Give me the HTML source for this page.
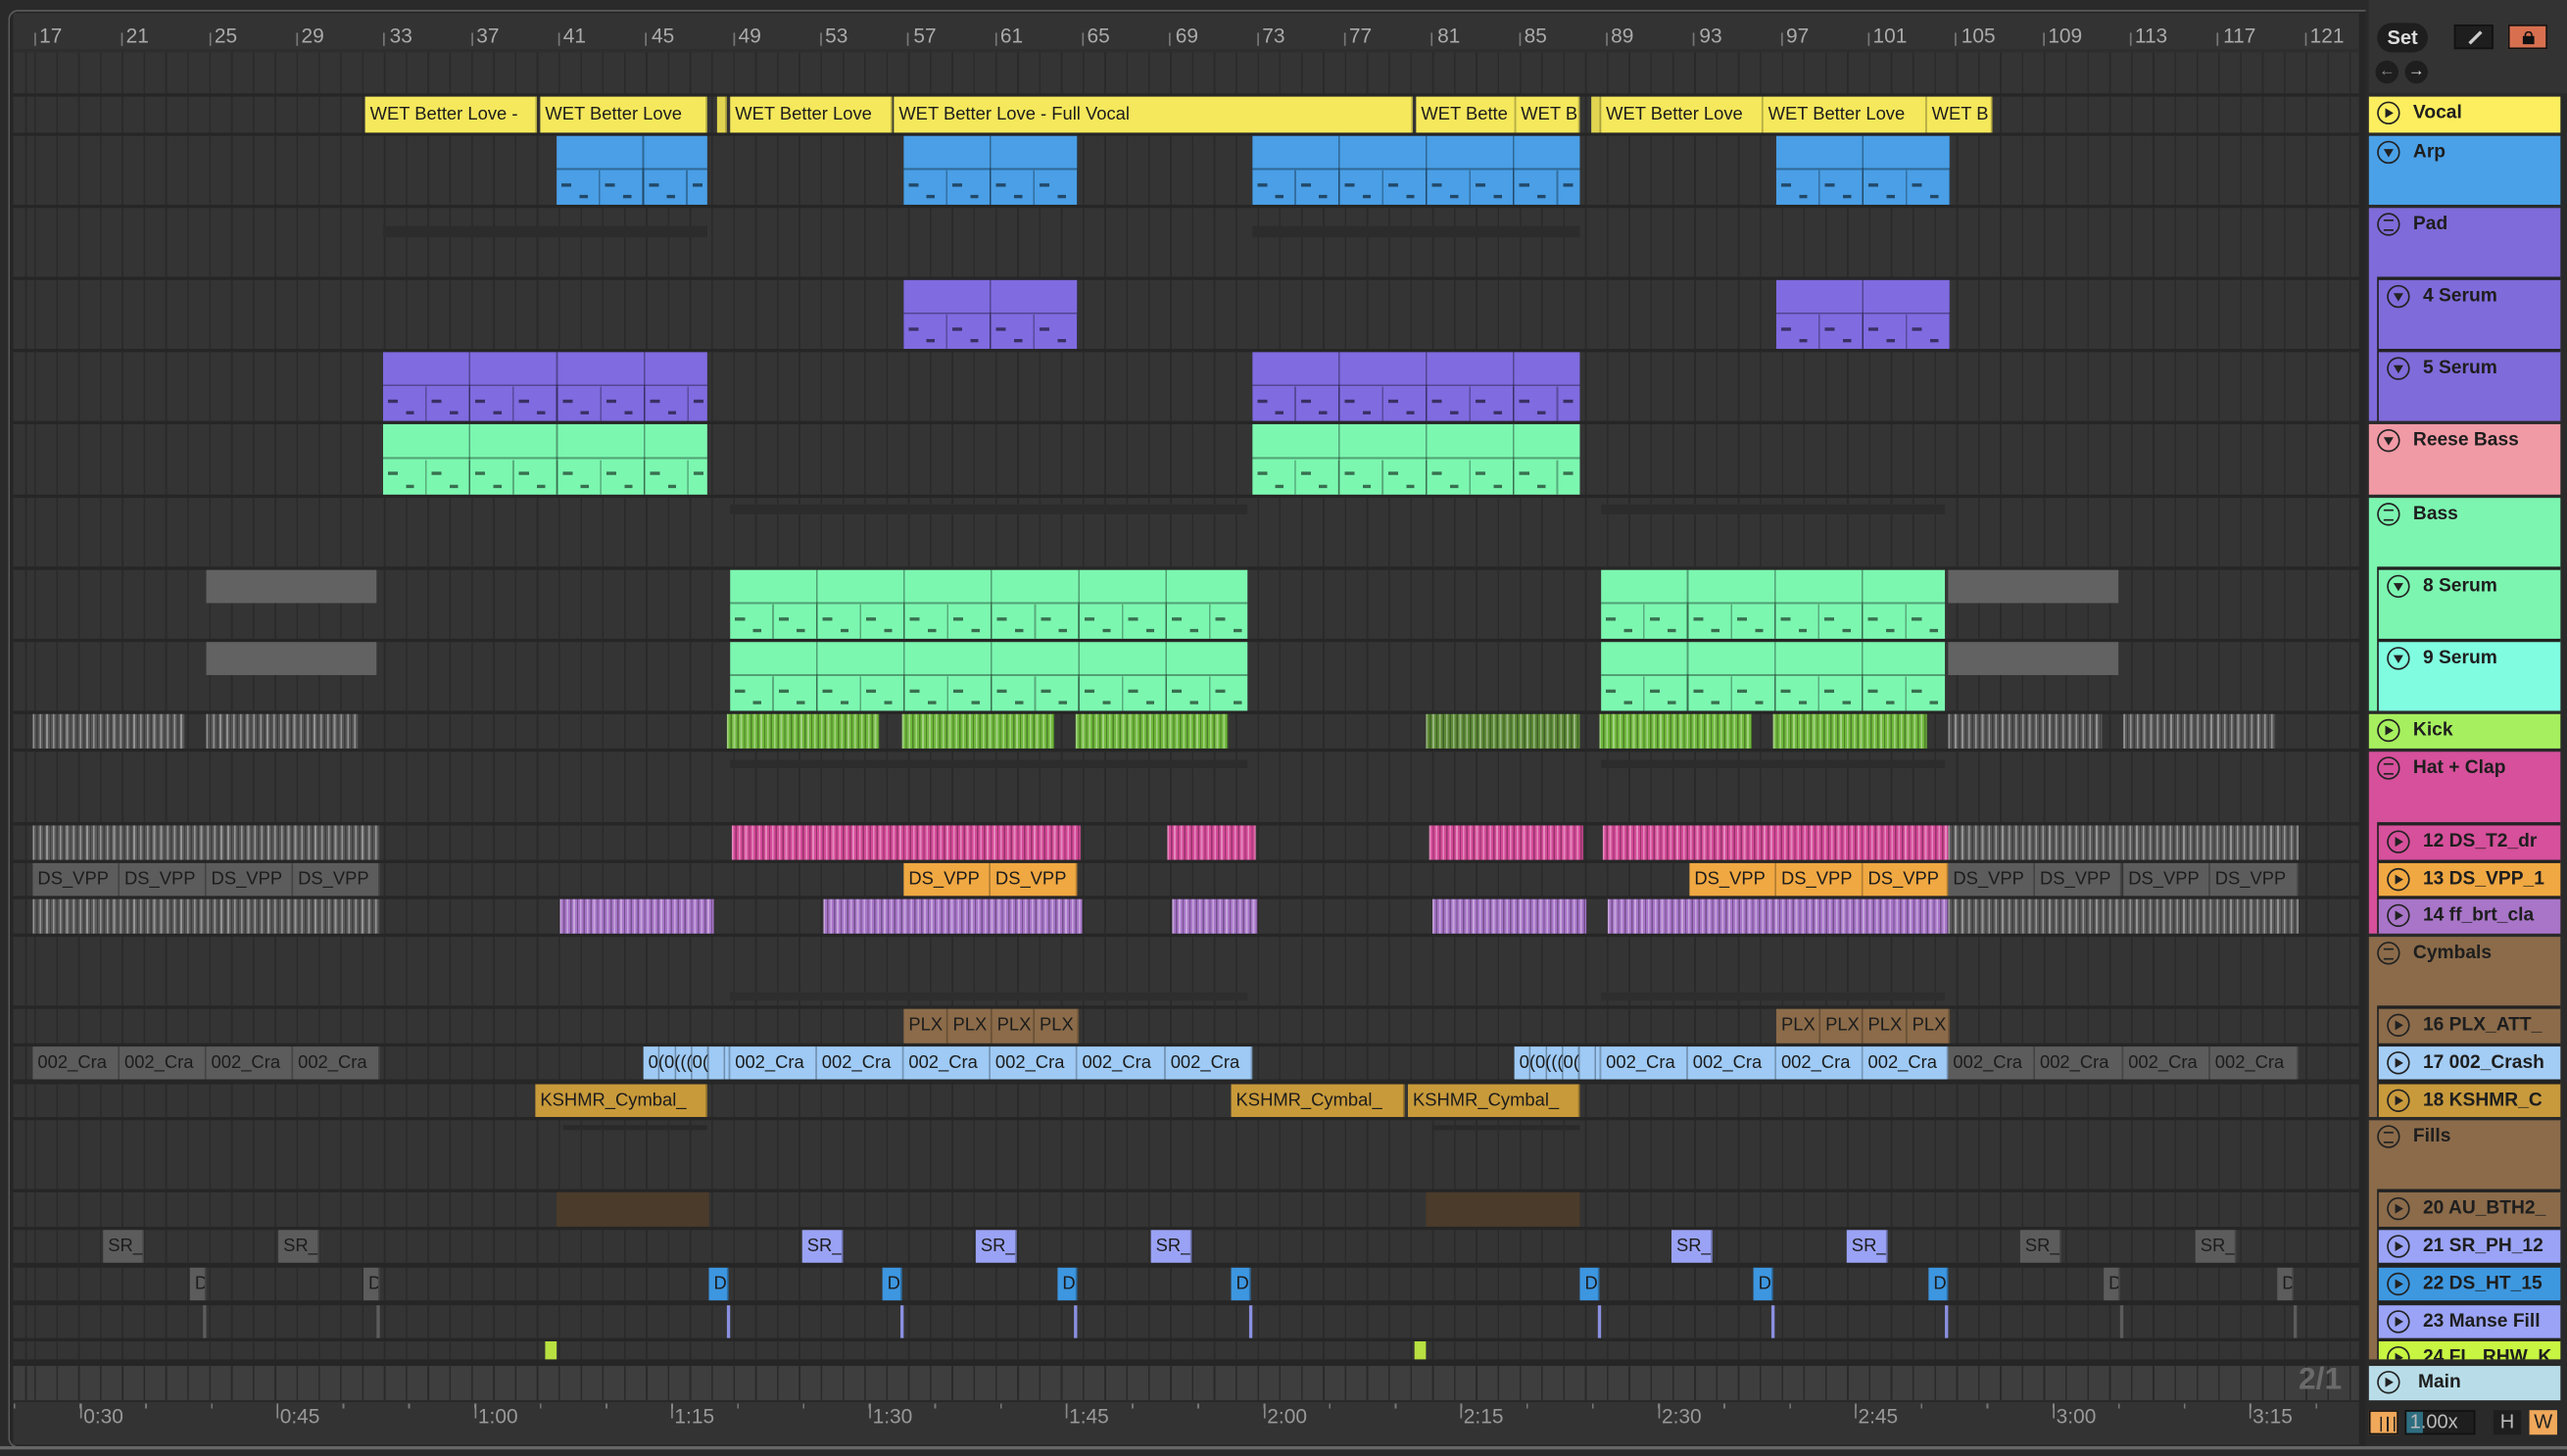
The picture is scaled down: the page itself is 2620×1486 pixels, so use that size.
<!DOCTYPE html>
<html><head><meta charset="utf-8"><style>
*{margin:0;padding:0;box-sizing:border-box}
html,body{width:2620px;height:1486px;overflow:hidden;background:#2a2a2a}
#s{position:absolute;left:0;top:0;width:1568px;height:889px;transform:scale(1.67092,1.67154);transform-origin:0 0;font-family:"Liberation Sans",sans-serif}
.a{position:absolute}
#panel{position:absolute;left:5px;top:6px;width:1440px;height:878px;border:1.5px solid #5a5a5a;border-right:none;border-radius:6px 0 0 6px;background:#262626}
.r{position:absolute;left:8px;width:1433px;background-color:#343434;background-image:repeating-linear-gradient(90deg,#2a2a2a 0 1px,transparent 1px 13.34px);background-position:13px 0}
.c{position:absolute;top:0;height:100%;overflow:hidden;white-space:nowrap;font-size:11px;line-height:100%;color:#1c1c1c}
.t{display:flex;align-items:center;padding-left:3px;border-right:1px solid rgba(0,0,0,.25)}
.m{background-image:linear-gradient(180deg,transparent 0 47%,rgba(0,0,0,.35) 47% calc(47% + 1px),transparent calc(47% + 1px)),repeating-linear-gradient(90deg,transparent 0 52.4px,rgba(0,0,0,.35) 52.4px 53.36px)}
.m::after{content:"";position:absolute;left:0;right:0;bottom:0;top:50%;background-image:repeating-linear-gradient(90deg,transparent 0 25.7px,rgba(0,0,0,.3) 25.7px 26.68px),repeating-linear-gradient(90deg,transparent 0 3px,rgba(0,0,0,.55) 3px 9px,transparent 9px 26.68px),repeating-linear-gradient(90deg,transparent 0 14px,rgba(0,0,0,.55) 14px 19px,transparent 19px 26.68px);background-size:auto,100% 2px,100% 2px;background-repeat:repeat,repeat-x,repeat-x;background-position:0 0,0 40%,0 80%}
.g{background:linear-gradient(180deg,#626262 0 48%,transparent 48%)}
.w{background-image:repeating-linear-gradient(90deg,rgba(255,255,255,.35) 0 1px,transparent 1px 2.2px,rgba(0,0,0,.3) 2.2px 3px,transparent 3px 4.1px)}
.h{position:absolute;left:1447px;width:117px;font-weight:bold;font-size:11.5px;color:#1e1e1e;padding-left:27px;padding-top:4px;white-space:nowrap;overflow:hidden}
.h.k{left:1453px;width:111px;padding-left:27px}
.h i{position:absolute;left:5px;top:3px;width:14px;height:14px;border:1.3px solid #222;border-radius:50%}
.h i.p::after{content:"";position:absolute;left:4px;top:2.5px;border-left:5px solid #222;border-top:3.3px solid transparent;border-bottom:3.3px solid transparent}
.h i.d::after{content:"";position:absolute;left:2.6px;top:4px;border-top:5px solid #222;border-left:3.3px solid transparent;border-right:3.3px solid transparent}
.h i.l::after{content:"";position:absolute;left:2.5px;top:3px;width:6px;height:5px;border-top:1.2px solid #222;border-bottom:1.2px solid #222}
.num{position:absolute;top:15px;font-size:12.5px;color:#aaa}
.tk{position:absolute;top:20px;width:1px;height:8px;background:#777}
.tm{position:absolute;top:858px;font-size:12.5px;color:#999}
.lt{position:absolute;top:857px;width:1px;height:9px;background:#888}
</style></head><body><div id="s">
<div id="panel"></div>
<div class="a" style="left:8px;top:8px;width:1433px;height:22px;background:#333"></div>
<div class="r" style="top:30px;height:27px"></div>
<div class="a" style="left:8px;top:30px;width:1433px;height:2px;background:#2e2e2e"></div>
<div class="tk" style="left:21px"></div><span class="num" style="left:24px">17</span>
<div class="tk" style="left:74px"></div><span class="num" style="left:77px">21</span>
<div class="tk" style="left:128px"></div><span class="num" style="left:131px">25</span>
<div class="tk" style="left:181px"></div><span class="num" style="left:184px">29</span>
<div class="tk" style="left:234px"></div><span class="num" style="left:238px">33</span>
<div class="tk" style="left:288px"></div><span class="num" style="left:291px">37</span>
<div class="tk" style="left:341px"></div><span class="num" style="left:344px">41</span>
<div class="tk" style="left:394px"></div><span class="num" style="left:398px">45</span>
<div class="tk" style="left:448px"></div><span class="num" style="left:451px">49</span>
<div class="tk" style="left:501px"></div><span class="num" style="left:504px">53</span>
<div class="tk" style="left:554px"></div><span class="num" style="left:558px">57</span>
<div class="tk" style="left:608px"></div><span class="num" style="left:611px">61</span>
<div class="tk" style="left:661px"></div><span class="num" style="left:664px">65</span>
<div class="tk" style="left:714px"></div><span class="num" style="left:718px">69</span>
<div class="tk" style="left:768px"></div><span class="num" style="left:771px">73</span>
<div class="tk" style="left:821px"></div><span class="num" style="left:824px">77</span>
<div class="tk" style="left:874px"></div><span class="num" style="left:878px">81</span>
<div class="tk" style="left:928px"></div><span class="num" style="left:931px">85</span>
<div class="tk" style="left:981px"></div><span class="num" style="left:984px">89</span>
<div class="tk" style="left:1034px"></div><span class="num" style="left:1038px">93</span>
<div class="tk" style="left:1088px"></div><span class="num" style="left:1091px">97</span>
<div class="tk" style="left:1141px"></div><span class="num" style="left:1144px">101</span>
<div class="tk" style="left:1194px"></div><span class="num" style="left:1198px">105</span>
<div class="tk" style="left:1248px"></div><span class="num" style="left:1251px">109</span>
<div class="tk" style="left:1301px"></div><span class="num" style="left:1304px">113</span>
<div class="tk" style="left:1354px"></div><span class="num" style="left:1358px">117</span>
<div class="tk" style="left:1408px"></div><span class="num" style="left:1411px">121</span>

<div class="r" style="top:59px;height:22px">
<div class="c t" style="left:215px;width:105px;background:#f5e85c">WET Better Love -</div>
<div class="c t" style="left:322px;width:102px;background:#f5e85c">WET Better Love</div>
<div class="c t" style="left:430px;width:6px;background:#e0d450"></div>
<div class="c t" style="left:438px;width:99px;background:#f5e85c">WET Better Love</div>
<div class="c t" style="left:538px;width:317px;background:#f5e85c">WET Better Love - Full Vocal</div>
<div class="c t" style="left:857px;width:61px;background:#f5e85c">WET Bette</div>
<div class="c t" style="left:918px;width:39px;background:#f5e85c">WET B</div>
<div class="c t" style="left:964px;width:6px;background:#e0d450"></div>
<div class="c t" style="left:970px;width:99px;background:#f5e85c">WET Better Love</div>
<div class="c t" style="left:1069px;width:100px;background:#f5e85c">WET Better Love</div>
<div class="c t" style="left:1169px;width:40px;background:#f5e85c">WET B</div>
</div>
<div class="r" style="top:83px;height:42px">
<div class="c m" style="left:332px;width:92px;background-color:#4a9fe6"></div>
<div class="c m" style="left:544px;width:106px;background-color:#4a9fe6"></div>
<div class="c m" style="left:757px;width:200px;background-color:#4a9fe6"></div>
<div class="c m" style="left:1077px;width:106px;background-color:#4a9fe6"></div>
</div>
<div class="r" style="top:127px;height:42px">
<div class="a" style="left:226px;top:11px;width:198px;height:7px;background:#2c2c2c"></div>
<div class="a" style="left:757px;top:11px;width:200px;height:7px;background:#2c2c2c"></div>
</div>
<div class="r" style="top:171px;height:42px">
<div class="c m" style="left:544px;width:106px;background-color:#806be0"></div>
<div class="c m" style="left:1077px;width:106px;background-color:#806be0"></div>
</div>
<div class="r" style="top:215px;height:42px">
<div class="c m" style="left:226px;width:198px;background-color:#806be0"></div>
<div class="c m" style="left:757px;width:200px;background-color:#806be0"></div>
</div>
<div class="r" style="top:259px;height:43px">
<div class="c m" style="left:226px;width:198px;background-color:#7cf7b0"></div>
<div class="c m" style="left:757px;width:200px;background-color:#7cf7b0"></div>
</div>
<div class="r" style="top:304px;height:42px">
<div class="a" style="left:438px;top:4px;width:316px;height:6px;background:#2c2c2c"></div>
<div class="a" style="left:970px;top:4px;width:210px;height:6px;background:#2c2c2c"></div>
</div>
<div class="r" style="top:348px;height:42px">
<div class="c g" style="left:118px;width:104px"></div>
<div class="c m" style="left:438px;width:316px;background-color:#7cf7b0"></div>
<div class="c m" style="left:970px;width:210px;background-color:#7cf7b0"></div>
<div class="c g" style="left:1182px;width:104px"></div>
</div>
<div class="r" style="top:392px;height:42px">
<div class="c g" style="left:118px;width:104px"></div>
<div class="c m" style="left:438px;width:316px;background-color:#7cf7b0"></div>
<div class="c m" style="left:970px;width:210px;background-color:#7cf7b0"></div>
<div class="c g" style="left:1182px;width:104px"></div>
</div>
<div class="r" style="top:436px;height:21px">
<div class="c w" style="left:12px;width:93px;background-color:#565656"></div>
<div class="c w" style="left:118px;width:93px;background-color:#565656"></div>
<div class="c w" style="left:436px;width:93px;background-color:#6fb83c"></div>
<div class="c w" style="left:543px;width:93px;background-color:#6fb83c"></div>
<div class="c w" style="left:649px;width:93px;background-color:#6fb83c"></div>
<div class="c w" style="left:863px;width:94px;background-color:#5c8a36"></div>
<div class="c w" style="left:969px;width:93px;background-color:#6fb83c"></div>
<div class="c w" style="left:1075px;width:94px;background-color:#6fb83c"></div>
<div class="c w" style="left:1182px;width:94px;background-color:#565656"></div>
<div class="c w" style="left:1289px;width:93px;background-color:#565656"></div>
</div>
<div class="r" style="top:459px;height:43px">
<div class="a" style="left:438px;top:5px;width:316px;height:5px;background:#2c2c2c"></div>
<div class="a" style="left:970px;top:5px;width:210px;height:5px;background:#2c2c2c"></div>
</div>
<div class="r" style="top:504px;height:21px">
<div class="c w" style="left:12px;width:212px;background-color:#5a5a5a"></div>
<div class="c w" style="left:439px;width:213px;background-color:#d44a98"></div>
<div class="c w" style="left:705px;width:54px;background-color:#d44a98"></div>
<div class="c w" style="left:865px;width:94px;background-color:#d44a98"></div>
<div class="c w" style="left:971px;width:211px;background-color:#d44a98"></div>
<div class="c w" style="left:1182px;width:214px;background-color:#5a5a5a"></div>
</div>
<div class="r" style="top:527px;height:20px">
<div class="c t" style="left:12px;width:53px;background:#5c5c5c">DS_VPP</div>
<div class="c t" style="left:65px;width:53px;background:#5c5c5c">DS_VPP</div>
<div class="c t" style="left:118px;width:53px;background:#5c5c5c">DS_VPP</div>
<div class="c t" style="left:171px;width:53px;background:#5c5c5c">DS_VPP</div>
<div class="c t" style="left:544px;width:53px;background:#f0a842">DS_VPP</div>
<div class="c t" style="left:597px;width:53px;background:#f0a842">DS_VPP</div>
<div class="c t" style="left:1024px;width:53px;background:#f0a842">DS_VPP</div>
<div class="c t" style="left:1077px;width:53px;background:#f0a842">DS_VPP</div>
<div class="c t" style="left:1130px;width:52px;background:#f0a842">DS_VPP</div>
<div class="c t" style="left:1182px;width:53px;background:#5c5c5c">DS_VPP</div>
<div class="c t" style="left:1235px;width:53px;background:#5c5c5c">DS_VPP</div>
<div class="c t" style="left:1289px;width:53px;background:#5c5c5c">DS_VPP</div>
<div class="c t" style="left:1342px;width:54px;background:#5c5c5c">DS_VPP</div>
</div>
<div class="r" style="top:549px;height:21px">
<div class="c w" style="left:12px;width:212px;background-color:#5a5a5a"></div>
<div class="c w" style="left:334px;width:94px;background-color:#a775c8"></div>
<div class="c w" style="left:495px;width:158px;background-color:#a775c8"></div>
<div class="c w" style="left:708px;width:52px;background-color:#a775c8"></div>
<div class="c w" style="left:867px;width:94px;background-color:#a775c8"></div>
<div class="c w" style="left:974px;width:208px;background-color:#a775c8"></div>
<div class="c w" style="left:1182px;width:214px;background-color:#5a5a5a"></div>
</div>
<div class="r" style="top:572px;height:42px">
<div class="a" style="left:438px;top:34px;width:316px;height:5px;background:#2e2e2e"></div>
<div class="a" style="left:970px;top:34px;width:210px;height:5px;background:#2e2e2e"></div>
</div>
<div class="r" style="top:616px;height:21px">
<div class="c t" style="left:544px;width:27px;background:#8b6b49">PLX</div>
<div class="c t" style="left:571px;width:27px;background:#8b6b49">PLX</div>
<div class="c t" style="left:598px;width:26px;background:#8b6b49">PLX</div>
<div class="c t" style="left:624px;width:27px;background:#8b6b49">PLX</div>
<div class="c t" style="left:1077px;width:27px;background:#8b6b49">PLX</div>
<div class="c t" style="left:1104px;width:26px;background:#8b6b49">PLX</div>
<div class="c t" style="left:1130px;width:27px;background:#8b6b49">PLX</div>
<div class="c t" style="left:1157px;width:26px;background:#8b6b49">PLX</div>
</div>
<div class="r" style="top:639px;height:20px">
<div class="c t" style="left:12px;width:53px;background:#5c5c5c">002_Cra</div>
<div class="c t" style="left:65px;width:53px;background:#5c5c5c">002_Cra</div>
<div class="c t" style="left:118px;width:53px;background:#5c5c5c">002_Cra</div>
<div class="c t" style="left:171px;width:53px;background:#5c5c5c">002_Cra</div>
<div class="c t" style="left:385px;width:53px;background:#9ecaf5;background-image:repeating-linear-gradient(90deg,transparent 0 9px,rgba(0,0,0,.3) 9px 10px)">0(0(((0(</div>
<div class="c t" style="left:438px;width:53px;background:#9ecaf5">002_Cra</div>
<div class="c t" style="left:491px;width:53px;background:#9ecaf5">002_Cra</div>
<div class="c t" style="left:544px;width:53px;background:#9ecaf5">002_Cra</div>
<div class="c t" style="left:597px;width:53px;background:#9ecaf5">002_Cra</div>
<div class="c t" style="left:650px;width:54px;background:#9ecaf5">002_Cra</div>
<div class="c t" style="left:704px;width:53px;background:#9ecaf5">002_Cra</div>
<div class="c t" style="left:917px;width:53px;background:#9ecaf5;background-image:repeating-linear-gradient(90deg,transparent 0 9px,rgba(0,0,0,.3) 9px 10px)">0(0(((0(</div>
<div class="c t" style="left:970px;width:53px;background:#9ecaf5">002_Cra</div>
<div class="c t" style="left:1023px;width:54px;background:#9ecaf5">002_Cra</div>
<div class="c t" style="left:1077px;width:53px;background:#9ecaf5">002_Cra</div>
<div class="c t" style="left:1130px;width:52px;background:#9ecaf5">002_Cra</div>
<div class="c t" style="left:1182px;width:53px;background:#5c5c5c">002_Cra</div>
<div class="c t" style="left:1235px;width:54px;background:#5c5c5c">002_Cra</div>
<div class="c t" style="left:1289px;width:53px;background:#5c5c5c">002_Cra</div>
<div class="c t" style="left:1342px;width:54px;background:#5c5c5c">002_Cra</div>
</div>
<div class="r" style="top:662px;height:20px">
<div class="c t" style="left:319px;width:105px;background:#c89a3a">KSHMR_Cymbal_</div>
<div class="c t" style="left:744px;width:106px;background:#c89a3a">KSHMR_Cymbal_</div>
<div class="c t" style="left:852px;width:105px;background:#c89a3a">KSHMR_Cymbal_</div>
</div>
<div class="r" style="top:684px;height:42px">
<div class="a" style="left:336px;top:3px;width:88px;height:3px;background:#2a2a2a"></div>
<div class="a" style="left:867px;top:3px;width:90px;height:3px;background:#2a2a2a"></div>
</div>
<div class="r" style="top:728px;height:21px">
<div class="c" style="left:332px;width:93px;background:#4b3b2a"></div>
<div class="c" style="left:863px;width:94px;background:#4b3b2a"></div>
</div>
<div class="r" style="top:751px;height:20px">
<div class="c t" style="left:55px;width:25px;background:#5c5c5c">SR_</div>
<div class="c t" style="left:162px;width:25px;background:#5c5c5c">SR_</div>
<div class="c t" style="left:482px;width:25px;background:#9aa2f5">SR_</div>
<div class="c t" style="left:588px;width:25px;background:#9aa2f5">SR_</div>
<div class="c t" style="left:695px;width:25px;background:#9aa2f5">SR_</div>
<div class="c t" style="left:1013px;width:25px;background:#9aa2f5">SR_</div>
<div class="c t" style="left:1120px;width:25px;background:#9aa2f5">SR_</div>
<div class="c t" style="left:1226px;width:25px;background:#5c5c5c">SR_</div>
<div class="c t" style="left:1333px;width:25px;background:#5c5c5c">SR_</div>
</div>
<div class="r" style="top:774px;height:20px">
<div class="c t" style="left:108px;width:10px;background:#5c5c5c">D</div>
<div class="c t" style="left:214px;width:10px;background:#5c5c5c">D</div>
<div class="c t" style="left:425px;width:12px;background:#3d96e0">DS</div>
<div class="c t" style="left:531px;width:12px;background:#3d96e0">D</div>
<div class="c t" style="left:638px;width:12px;background:#3d96e0">D</div>
<div class="c t" style="left:744px;width:12px;background:#3d96e0">D</div>
<div class="c t" style="left:957px;width:12px;background:#3d96e0">D</div>
<div class="c t" style="left:1063px;width:12px;background:#3d96e0">D</div>
<div class="c t" style="left:1170px;width:12px;background:#3d96e0">D</div>
<div class="c t" style="left:1277px;width:10px;background:#5c5c5c">D</div>
<div class="c t" style="left:1383px;width:10px;background:#5c5c5c">D</div>
</div>
<div class="r" style="top:797px;height:20px">
<div class="c" style="left:116px;width:2px;background:#5c5c5c"></div>
<div class="c" style="left:222px;width:2px;background:#5c5c5c"></div>
<div class="c" style="left:436px;width:2px;background:#8a90e0"></div>
<div class="c" style="left:542px;width:2px;background:#8a90e0"></div>
<div class="c" style="left:648px;width:2px;background:#8a90e0"></div>
<div class="c" style="left:755px;width:2px;background:#8a90e0"></div>
<div class="c" style="left:968px;width:2px;background:#8a90e0"></div>
<div class="c" style="left:1074px;width:2px;background:#8a90e0"></div>
<div class="c" style="left:1180px;width:2px;background:#8a90e0"></div>
<div class="c" style="left:1287px;width:2px;background:#5c5c5c"></div>
<div class="c" style="left:1393px;width:2px;background:#5c5c5c"></div>
</div>
<div class="r" style="top:819px;height:11px">
<div class="c" style="left:325px;width:7px;background:#b8e040"></div>
<div class="c" style="left:856px;width:7px;background:#b8e040"></div>
</div>
<div class="r" style="top:834px;height:21px;background-color:#3e3e3e"></div>
<div class="a" style="left:1404px;top:832px;font-size:19px;font-weight:bold;color:#6a6a6a">2/1</div>
<div class="a" style="left:8px;top:856px;width:1433px;height:26px;background:#333"></div>
<div class="a" style="left:8px;top:857px;width:1433px;height:3px;background-image:repeating-linear-gradient(90deg,#777 0 1px,transparent 1px 40.17px);background-position:0.4px 0"></div>
<div class="lt" style="left:49px"></div><div class="lt" style="left:169px"></div><div class="lt" style="left:290px"></div><div class="lt" style="left:410px"></div><div class="lt" style="left:531px"></div><div class="lt" style="left:651px"></div><div class="lt" style="left:772px"></div><div class="lt" style="left:892px"></div><div class="lt" style="left:1013px"></div><div class="lt" style="left:1133px"></div><div class="lt" style="left:1254px"></div><div class="lt" style="left:1374px"></div>
<span class="tm" style="left:51px">0:30</span><span class="tm" style="left:171px">0:45</span><span class="tm" style="left:292px">1:00</span><span class="tm" style="left:412px">1:15</span><span class="tm" style="left:533px">1:30</span><span class="tm" style="left:653px">1:45</span><span class="tm" style="left:774px">2:00</span><span class="tm" style="left:894px">2:15</span><span class="tm" style="left:1015px">2:30</span><span class="tm" style="left:1135px">2:45</span><span class="tm" style="left:1256px">3:00</span><span class="tm" style="left:1376px">3:15</span>

<div class="a" style="left:1447px;top:0;width:121px;height:57px;background:#333"></div>
<div class="a" style="left:1452px;top:14px;width:31px;height:18px;border-radius:9px;background:#1e1e1e;color:#ddd;font-size:12px;font-weight:bold;text-align:center;line-height:18px">Set</div>
<div class="a" style="left:1499px;top:15px;width:24px;height:15px;background:#1e1e1e;border:1px solid #111"><div class="a" style="left:7px;top:6px;width:10px;height:2px;background:#ccc;transform:rotate(-45deg)"></div></div>
<div class="a" style="left:1532px;top:15px;width:24px;height:15px;background:#d87050;border:1px solid #111"><div class="a" style="left:8px;top:6px;width:7px;height:5px;background:#111"></div><div class="a" style="left:9px;top:3px;width:5px;height:5px;border:1.3px solid #111;border-bottom:none;border-radius:3px 3px 0 0"></div></div>
<div class="a" style="left:1451px;top:37px;width:14px;height:14px;border-radius:50%;background:#1e1e1e;color:#888;font-size:10px;text-align:center;line-height:14px">&#8592;</div>
<div class="a" style="left:1469px;top:37px;width:14px;height:14px;border-radius:50%;background:#1e1e1e;color:#ddd;font-size:10px;text-align:center;line-height:14px">&#8594;</div>

<div class="h" style="top:59px;height:22px;background:#fcee5f"><i class="p"></i>Vocal</div>
<div class="h" style="top:83px;height:42px;background:#4aa1e8"><i class="d"></i>Arp</div>
<div class="h" style="top:127px;height:130px;background:#7f6bd9"><i class="l"></i>Pad</div>
<div class="a" style="left:1452px;top:169px;width:112px;height:88px;background:#222"></div>
<div class="h k" style="top:171px;height:42px;background:#7f6bd9"><i class="d"></i>4 Serum</div>
<div class="h k" style="top:215px;height:42px;background:#7f6bd9"><i class="d"></i>5 Serum</div>
<div class="h" style="top:259px;height:43px;background:#f09aa5"><i class="d"></i>Reese Bass</div>
<div class="h" style="top:304px;height:130px;background:#7cf5b0"><i class="l"></i>Bass</div>
<div class="a" style="left:1452px;top:346px;width:112px;height:88px;background:#222"></div>
<div class="h k" style="top:348px;height:42px;background:#7cf5b0"><i class="d"></i>8 Serum</div>
<div class="h k" style="top:392px;height:42px;background:#80fde0"><i class="d"></i>9 Serum</div>
<div class="h" style="top:436px;height:21px;background:#a6ef5e"><i class="p"></i>Kick</div>
<div class="h" style="top:459px;height:111px;background:#d6509b"><i class="l"></i>Hat + Clap</div>
<div class="a" style="left:1452px;top:502px;width:112px;height:68px;background:#222"></div>
<div class="h k" style="top:504px;height:21px;background:#d6509b"><i class="p"></i>12 DS_T2_dr</div>
<div class="h k" style="top:527px;height:20px;background:#f0a842"><i class="p"></i>13 DS_VPP_1</div>
<div class="h k" style="top:549px;height:21px;background:#a875c8"><i class="p"></i>14 ff_brt_cla</div>
<div class="h" style="top:572px;height:110px;background:#8b6b4a"><i class="l"></i>Cymbals</div>
<div class="a" style="left:1452px;top:614px;width:112px;height:68px;background:#222"></div>
<div class="h k" style="top:616px;height:21px;background:#8b6b4a"><i class="p"></i>16 PLX_ATT_</div>
<div class="h k" style="top:639px;height:20px;background:#a4cdf5"><i class="p"></i>17 002_Crash</div>
<div class="h k" style="top:662px;height:20px;background:#c89a3c"><i class="p"></i>18 KSHMR_C</div>
<div class="h" style="top:684px;height:146px;background:#8b6b4a"><i class="l"></i>Fills</div>
<div class="a" style="left:1452px;top:726px;width:112px;height:104px;background:#222"></div>
<div class="h k" style="top:728px;height:21px;background:#8b6b4a"><i class="p"></i>20 AU_BTH2_</div>
<div class="h k" style="top:751px;height:20px;background:#9aa3f5"><i class="p"></i>21 SR_PH_12</div>
<div class="h k" style="top:774px;height:20px;background:#3d98e0"><i class="p"></i>22 DS_HT_15</div>
<div class="h k" style="top:797px;height:20px;background:#9aa3f5"><i class="p"></i>23 Manse Fill</div>
<div class="h k" style="top:819px;height:11px;background:#c8f542"><i class="p"></i>24 FL_RHW_K</div>
<div class="h" style="top:834px;height:21px;background:#b8dde8;padding-left:30px"><i class="p"></i>Main</div>

<div class="a" style="left:1447px;top:861px;width:18px;height:15px;background:#f0a85a;border:1px solid #111;background-image:repeating-linear-gradient(90deg,transparent 0 3px,#222 3px 4px);background-size:12px 9px;background-position:3px 3px;background-repeat:no-repeat"></div>
<div class="a" style="left:1469px;top:861px;width:43px;height:15px;background:#1e1e1e;border:1px solid #111;color:#bbb;font-size:12px;line-height:13px;padding-left:2px"><span class="a" style="left:0;top:0;width:10px;height:13px;background:#2e6e80"></span><span style="position:relative">1.00x</span></div>
<div class="a" style="left:1523px;top:861px;width:17px;height:15px;background:#1e1e1e;color:#bbb;font-size:12px;text-align:center;line-height:15px">H</div>
<div class="a" style="left:1545px;top:861px;width:17px;height:15px;background:#f0a85a;color:#222;font-size:12px;text-align:center;line-height:15px">W</div>
<div class="a" style="left:0;top:883px;width:1568px;height:2px;background:#666"></div>
</div></body></html>
